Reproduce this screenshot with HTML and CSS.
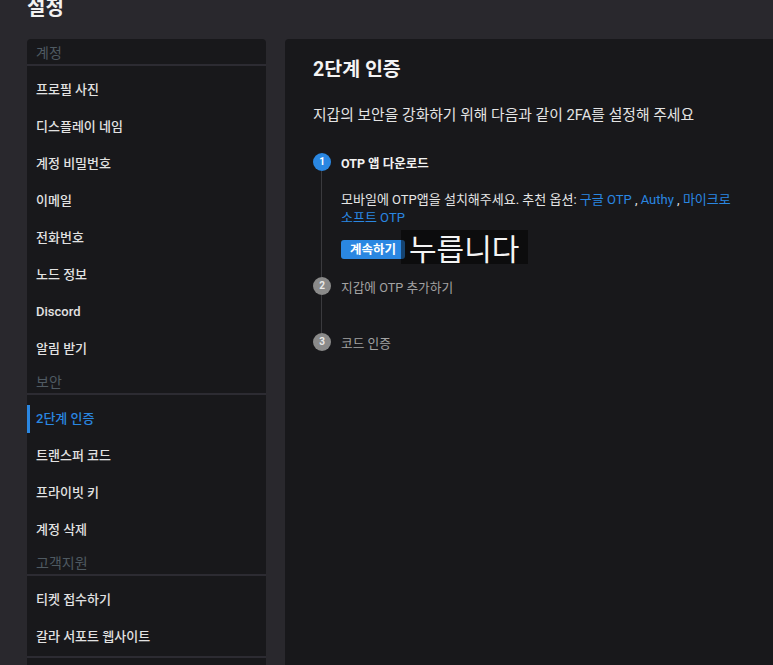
FILE: index.html
```html
<!DOCTYPE html>
<html lang="ko">
<head>
  <meta charset="UTF-8">
  <title>설정</title>
  <link rel="stylesheet" href="styles.css">
</head>
<body>
  <h1 class="page-title">설정</h1>
  <div class="layout">
    <nav class="sidebar">
      <div class="nav-header">계정</div>
      <ul class="nav-list">
        <li>프로필 사진</li>
        <li>디스플레이 네임</li>
        <li>계정 비밀번호</li>
        <li>이메일</li>
        <li>전화번호</li>
        <li>노드 정보</li>
        <li>Discord</li>
        <li>알림 받기</li>
      </ul>
      <div class="nav-header">보안</div>
      <ul class="nav-list">
        <li class="active">2단계 인증</li>
        <li>트랜스퍼 코드</li>
        <li>프라이빗 키</li>
        <li>계정 삭제</li>
      </ul>
      <div class="nav-header">고객지원</div>
      <ul class="nav-list last">
        <li>티켓 접수하기</li>
        <li>갈라 서포트 웹사이트</li>
      </ul>
    </nav>

    <main class="content">
      <h2 class="content-title">2단계 인증</h2>
      <p class="content-desc">지갑의 보안을 강화하기 위해 다음과 같이 2FA를 설정해 주세요</p>

      <div class="steps">
        <div class="step current">
          <div class="step-head">
            <span class="step-num">1</span>
            <span class="step-label">OTP 앱 다운로드</span>
          </div>
          <div class="step-body">
            <p class="step-text">모바일에 OTP앱을 설치해주세요. 추천 옵션: <a href="#">구글 OTP</a> , <a href="#">Authy</a> , <a href="#">마이크로 소프트 OTP</a></p>
            <div class="step-actions">
              <button class="btn-primary">계속하기</button>
              <span class="press-note">누릅니다</span>
            </div>
          </div>
        </div>
        <div class="step">
          <div class="step-head">
            <span class="step-num">2</span>
            <span class="step-label">지갑에 OTP 추가하기</span>
          </div>
          <div class="step-body empty"></div>
        </div>
        <div class="step">
          <div class="step-head">
            <span class="step-num">3</span>
            <span class="step-label">코드 인증</span>
          </div>
        </div>
      </div>
    </main>
  </div>
</body>
</html>
```

FILE: styles.css
```css
html, body {
  margin: 0;
  padding: 0;
  overflow: hidden;
}
body {
  background-color: #29282d;
  color: #e6e6e6;
  font-family: Roboto, "Noto Sans CJK KR", sans-serif;
}
.page-title {
  margin: -6px 0 17px 27px;
  font-size: 20px;
  line-height: 28px;
  font-weight: 700;
  color: #f2f2f2;
}
.layout {
  display: flex;
  gap: 19px;
  padding-left: 27px;
  width: calc(100% + 10px);
  box-sizing: border-box;
}
.sidebar {
  width: 239px;
  flex-shrink: 0;
  background-color: #18181b;
  border-radius: 4px 4px 0 0;
}
.nav-header {
  padding: 3px 9px 0;
  line-height: 22px;
  font-size: 14px;
  color: #4f5a62;
  border-bottom: 2px solid #2c2b32;
}
.nav-list {
  list-style: none;
  margin: 0;
  padding: 5px 0 1px;
}
.nav-list.last {
  border-bottom: 2px solid #2c2b32;
}
.nav-list li {
  position: relative;
  height: 37px;
  line-height: 37px;
  padding-left: 9px;
  font-size: 13px;
  font-weight: 500;
  color: #e2e2e2;
}
.nav-list li.active {
  color: #2a87e2;
}
.nav-list li.active::before {
  content: "";
  position: absolute;
  left: 0;
  top: 5px;
  bottom: 4px;
  width: 3px;
  background-color: #2a87e2;
}
.content {
  flex: 1;
  min-height: 640px;
  background-color: #18181b;
  border-radius: 4px;
  padding: 18px 28px;
}
.content-title {
  margin: 0;
  font-size: 19.5px;
  line-height: 26px;
  font-weight: 700;
  color: #f4f4f4;
}
.content-desc {
  margin: 22px 0 0;
  font-size: 14.8px;
  line-height: 20px;
  color: #e4e4e4;
}
.steps {
  margin-top: 28px;
}
.step-head {
  display: flex;
  align-items: center;
  gap: 10px;
  height: 18px;
}
.step-num {
  width: 18px;
  height: 18px;
  border-radius: 50%;
  background-color: #8a8a8a;
  color: #e8e8e8;
  font-size: 10px;
  font-weight: 700;
  line-height: 18px;
  text-align: center;
}
.step-label {
  font-size: 12.7px;
  color: #a3a3a3;
}
.step.current .step-num {
  background-color: #2a87e2;
  color: #fff;
}
.step.current .step-label {
  color: #f2f2f2;
  font-weight: 700;
  font-size: 12.5px;
}
.step-body {
  margin-left: 8px;
  border-left: 1px solid #3a3a3e;
  padding: 20px 0 19px 19px;
  max-width: 400px;
}
.step-body.empty {
  height: 38px;
  padding: 0;
}
.step-text {
  margin: 0;
  font-size: 13px;
  line-height: 18px;
  color: #e6e6e6;
  word-break: keep-all;
}
.step-text a {
  color: #2a87e2;
  text-decoration: none;
}
.step-actions {
  position: relative;
  margin-top: 12px;
  height: 19px;
}
.btn-primary {
  height: 19px;
  padding: 0 9px;
  border: none;
  border-radius: 3px;
  background-color: #2a87e2;
  color: #fff;
  font-family: inherit;
  font-size: 12.5px;
  font-weight: 700;
  line-height: 19px;
  cursor: pointer;
}
.press-note {
  position: absolute;
  left: 60px;
  top: -9px;
  width: 127px;
  height: 34px;
  padding-left: 8px;
  box-sizing: border-box;
  background-color: rgba(0, 0, 0, 0.5);
  color: #f4f4f4;
  font-family: "Noto Sans CJK KR", sans-serif;
  font-size: 30px;
  line-height: 34px;
  font-weight: 400;
}
```
